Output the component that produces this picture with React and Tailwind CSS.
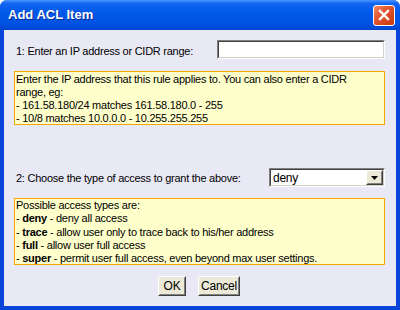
import React, { useState } from 'react';

const font = { fontFamily: '"Liberation Sans", Arial, sans-serif' };

function Sunken({ className, children }) {
  return (
    <div className={`border border-t-[#808080] border-l-[#808080] border-b-white border-r-white ${className}`}>
      <div className="h-full border border-t-[#404040] border-l-[#404040] border-b-[#d4d0c8] border-r-[#d4d0c8] bg-white">
        {children}
      </div>
    </div>
  );
}

function Raised({ className, children }) {
  return (
    <div className={`border border-t-white border-l-white border-b-[#404040] border-r-[#404040] bg-[#ece9d8] ${className}`}>
      <div className="h-full flex items-center justify-center border border-t-[#ece9d8] border-l-[#ece9d8] border-b-[#808080] border-r-[#808080]">
        {children}
      </div>
    </div>
  );
}

function CloseButton() {
  return (
    <div className="w-[22px] h-[21px] rounded-[3px] border border-white bg-[linear-gradient(135deg,#f08a6a_0%,#e2562e_40%,#c9380f_100%)] flex items-center justify-center">
      <svg width="12" height="12" viewBox="0 0 12 12">
        <path d="M2 2 L10 10 M10 2 L2 10" stroke="white" strokeWidth="2.4" strokeLinecap="square" />
      </svg>
    </div>
  );
}

export default function App() {
  const [ip, setIp] = useState('');

  return (
    <div className="w-[400px] h-[310px] flex flex-col bg-[#0845d8] rounded-t-[7px] overflow-hidden text-[11px] tracking-[-0.25px] text-black" style={font}>
      <div className="h-[30px] shrink-0 flex items-center justify-between pl-[8px] pr-[5px] bg-[linear-gradient(to_bottom,#4a95ff_0%,#1165f2_12%,#0058e8_45%,#0052e2_80%,#0045d0_100%)]">
        <span className="text-white font-bold text-[13px] tracking-[0px] [text-shadow:1px_1px_0_#0a2a90]">Add ACL Item</span>
        <CloseButton />
      </div>

      <div className="flex-1 mx-[4px] mb-[4px] bg-[#e9e9f5] flex flex-col pl-[10px] pr-[11px] pt-[10px]">
        <div className="flex items-center justify-between h-[19px]">
          <span className="pl-[2px] mt-[3px]">1: Enter an IP address or CIDR range:</span>
          <Sunken className="w-[168px] h-[19px]">
            <input
              value={ip}
              onChange={(e) => setIp(e.target.value)}
              className="w-full h-full outline-none px-1 text-[11px]"
            />
          </Sunken>
        </div>

        <div className="mt-[12px] border border-[#f5a800] bg-[#ffffcc] px-[1px] leading-[13px] h-[54px] pt-[1px]">
          <div>Enter the IP address that this rule applies to. You can also enter a CIDR</div>
          <div>range, eg:</div>
          <div>- 161.58.180/24 matches 161.58.180.0 - 255</div>
          <div>- 10/8 matches 10.0.0.0 - 10.255.255.255</div>
        </div>

        <div className="mt-[43px] flex items-center justify-between h-[19px]">
          <span className="pl-[2px] mt-[2px]">2: Choose the type of access to grant the above:</span>
          <Sunken className="w-[116px] h-[19px]">
            <div className="flex items-center h-full">
              <span className="flex-1 pl-[2px] text-[12px]">deny</span>
              <Raised className="w-[17px] h-[15px]">
                <svg width="7" height="4" viewBox="0 0 7 4">
                  <path d="M0 0 H7 L3.5 4 Z" fill="black" />
                </svg>
              </Raised>
            </div>
          </Sunken>
        </div>

        <div className="mt-[11px] border border-[#f5a800] bg-[#ffffcc] px-[1px] leading-[13.3px] h-[67px]">
          <div>Possible access types are:</div>
          <div>- <b>deny</b> - deny all access</div>
          <div>- <b>trace</b> - allow user only to trace back to his/her address</div>
          <div>- <b>full</b> - allow user full access</div>
          <div>- <b>super</b> - permit user full access, even beyond max user settings.</div>
        </div>

        <div className="mt-[11px] flex justify-center gap-[12px] pr-[1px]">
          <Raised className="w-[28px] h-[20px]">
            <span className="text-[12px]">OK</span>
          </Raised>
          <Raised className="w-[42px] h-[20px]">
            <span className="text-[12px]">Cancel</span>
          </Raised>
        </div>
      </div>
    </div>
  );
}
